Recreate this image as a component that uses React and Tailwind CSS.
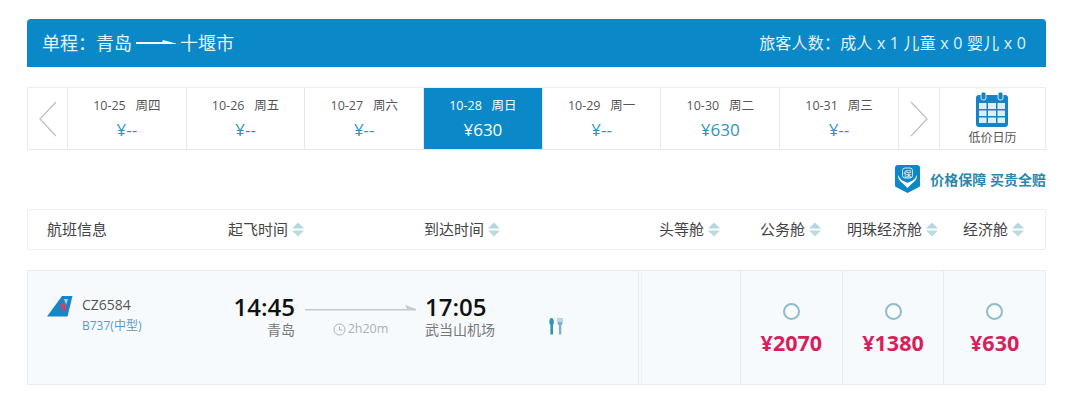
import React from 'react';

const FONT = "font-['Open_Sans','Noto_Sans_CJK_SC',sans-serif]";

const dates = [
  { date: '10-25', week: '周四', price: '¥--' },
  { date: '10-26', week: '周五', price: '¥--' },
  { date: '10-27', week: '周六', price: '¥--' },
  { date: '10-28', week: '周日', price: '¥630', active: true },
  { date: '10-29', week: '周一', price: '¥--' },
  { date: '10-30', week: '周二', price: '¥630' },
  { date: '10-31', week: '周三', price: '¥--' },
];

const fares = ['¥2070', '¥1380', '¥630'];

const SortIcon = () => (
  <svg width="12" height="15" viewBox="0 0 12 15" className="ml-[4px] shrink-0">
    <path d="M6 0.5 L12 6.5 H0 Z" fill="#b5d5e2" />
    <path d="M0 8.5 H12 L6 14.5 Z" fill="#b9dcdc" />
  </svg>
);

const Chevron = ({ right }) => (
  <svg width="18" height="36" viewBox="0 0 18 36" fill="none" stroke="#b9bfc4" strokeWidth="1.2">
    <path d={right ? 'M1 1 L17 18 L1 35' : 'M17 1 L1 18 L17 35'} />
  </svg>
);

const HeaderCell = ({ label, sort = true }) => (
  <div className="flex items-center text-[15px] text-[#444]">
    {label}
    {sort && <SortIcon />}
  </div>
);

const App = () => {
  return (
    <div className={`w-[1080px] h-[410px] bg-white overflow-hidden pl-[27px] pt-[19px] ${FONT}`}>
      <div className="w-[1019px]">
        {/* title bar */}
        <div className="h-[48px] bg-[#0a88c8] rounded-t-[4px] flex items-center justify-between pl-[15px] pr-[20px] text-[#e4f3fa]">
          <div className="flex items-center text-[18px]">
            <span>单程：青岛</span>
            <svg width="40" height="8" viewBox="0 0 40 8" className="ml-[4px] mr-[4px]">
              <path d="M0 3 H26 L27 1 L40 4.5 V5 H0 Z" fill="#f2fafd" />
            </svg>
            <span>十堰市</span>
          </div>
          <div className="text-[16px] tracking-[0.2px]">旅客人数：成人 x 1 儿童 x 0 婴儿 x 0</div>
        </div>

        {/* date strip */}
        <div className="mt-[20px] h-[63px] flex border border-[#e6e8ea] border-t-[#eceef0]">
          <div className="w-[40px] shrink-0 flex items-center justify-center border-r border-[#e6e8ea]">
            <Chevron />
          </div>
          {dates.map((d) => (
            <div
              key={d.date}
              className={`w-[118.7px] shrink-0 flex flex-col items-center pt-[8px] border-r border-[#e6e8ea] ${d.active ? 'bg-[#0a88c8] text-white' : 'text-[#555]'}`}
            >
              <div className="text-[12.5px] leading-[20px] whitespace-pre">{d.date}{'   '}{d.week}</div>
              <div className={`text-[17px] leading-[24px] mt-[2px] ${d.active ? 'text-white' : 'text-[#2f93b8]'}`}>{d.price}</div>
            </div>
          ))}
          <div className="w-[41px] shrink-0 flex items-center justify-center border-r border-[#e6e8ea]">
            <Chevron right />
          </div>
          <div className="flex-1 flex flex-col items-center pt-[4px]">
            <svg width="32" height="35" viewBox="0 0 32 35">
              <rect x="0" y="3" width="32" height="32" rx="3" fill="#1583c4" />
              <rect x="5" y="0" width="5" height="8" rx="2" fill="#1583c4" stroke="#fff" strokeWidth="0.8" />
              <rect x="22" y="0" width="5" height="8" rx="2" fill="#1583c4" stroke="#fff" strokeWidth="0.8" />
              <g fill="#dceef8">
                <rect x="3" y="11" width="7.5" height="6" />
                <rect x="12" y="11" width="8" height="6" />
                <rect x="21.5" y="11" width="7.5" height="6" />
                <rect x="3" y="18.5" width="7.5" height="5.5" />
                <rect x="12" y="18.5" width="8" height="5.5" />
                <rect x="21.5" y="18.5" width="7.5" height="5.5" />
                <rect x="3" y="25.5" width="7.5" height="5.5" />
                <rect x="12" y="25.5" width="8" height="5.5" />
                <rect x="21.5" y="25.5" width="7.5" height="5.5" />
              </g>
            </svg>
            <div className="text-[12px] leading-[14px] mt-[4px] text-[#555]">低价日历</div>
          </div>
        </div>

        {/* price guarantee */}
        <div className="h-[58px] flex items-center justify-end">
          <svg width="25" height="28" viewBox="0 0 25 28" className="mr-[10px]">
            <path d="M3 0 H22 A3 3 0 0 1 25 3 V20 A2 2 0 0 1 24 22 L12.5 28 L1 22 A2 2 0 0 1 0 20 V3 A3 3 0 0 1 3 0 Z" fill="#0a88c8" />
            <path d="M3 10 C3 16 7 17 12.5 23 C18 17 22 16 22 10 L19.5 14 C17 16.5 15 16 12.5 18 C10 16 8 16.5 5.5 14 Z" fill="#fff" />
            <rect x="7.5" y="3" width="10" height="10" rx="2.5" fill="none" stroke="#fff" strokeWidth="0.8" />
            <text x="12.5" y="11.5" textAnchor="middle" fontSize="8" fill="#fff">保</text>
          </svg>
          <span className="text-[14px] font-bold text-[#2a87ad]">价格保障 买贵全赔</span>
        </div>

        {/* table header */}
        <div className="h-[41px] border border-[#eceef0] rounded-[2px] grid grid-cols-[181px_196px_235px_101px_87px_116px_1fr] pl-[19px] mt-[1px]">
          <HeaderCell label="航班信息" sort={false} />
          <HeaderCell label="起飞时间" />
          <HeaderCell label="到达时间" />
          <HeaderCell label="头等舱" />
          <HeaderCell label="公务舱" />
          <HeaderCell label="明珠经济舱" />
          <HeaderCell label="经济舱" />
        </div>

        {/* flight row */}
        <div className="mt-[20px] h-[115px] bg-[#f6fafd] border border-[#e8ecef] flex">
          <div className="w-[610px] shrink-0 flex relative">
            <div className="w-[199px] shrink-0 pl-[19px] pt-[25px] flex">
              <svg width="26" height="22" viewBox="0 0 26 22">
                <path d="M15 0 L25.5 0 L20.5 20.5 L0 20.5 Z" fill="#1586c6" />
                <path d="M14 7 C18 6 20 10 18.5 15 C15 15 12 11 14 7 Z" fill="#c8456a" />
                <path d="M17 3 L21 3 L19 9 Z" fill="#a8d0e6" />
              </svg>
              <div className="ml-[9px]">
                <div className="text-[14px] leading-[20px] mt-[-1px] text-[#555]">CZ6584</div>
                <div className="text-[12px] leading-[20px] mt-[1px] text-[#5c9cc4]">B737(中型)</div>
              </div>
            </div>
            <div className="w-[68px] shrink-0 pt-[22px] text-right">
              <div className="text-[24px] leading-[28px] font-semibold text-[#111]">14:45</div>
              <div className="text-[14px] leading-[18px] text-[#777]">青岛</div>
            </div>
            <div className="w-[111px] shrink-0 ml-[10px] pt-[31px]">
              <svg width="111" height="9" viewBox="0 0 111 9" className="block">
                <path d="M0 7 H102 L100 3 L111 7 V8.4 H0 Z" fill="#c3c9ce" />
              </svg>
              <div className="mt-[9px] flex items-center justify-center text-[12.5px] text-[#aab0b5]">
                <svg width="13" height="13" viewBox="0 0 13 13" fill="none" stroke="#aab0b5" strokeWidth="1" className="mr-[2px]">
                  <circle cx="6.5" cy="6.5" r="5.5" />
                  <path d="M6.5 3.5 V7 H9.5" />
                </svg>
                2h20m
              </div>
            </div>
            <div className="ml-[9px] pt-[22px]">
              <div className="text-[24px] leading-[28px] font-semibold text-[#111]">17:05</div>
              <div className="text-[14px] leading-[18px] text-[#777]">武当山机场</div>
            </div>
            <svg width="16" height="17" viewBox="0 0 16 17" className="absolute left-[520px] top-[47px]">
              <path d="M3.5 0 C6 0 6.5 5 5 7 V16.5 H2.4 V7 C0.8 5 1 0 3.5 0 Z" fill="#2f93b8" />
              <path d="M9.5 0 H10.5 V4 H11.5 V0 H12.5 V4 H13.5 V0 H14.5 V5 C14.5 6.5 13.5 7 13.3 7.5 V16.5 H10.9 V7.5 C10.5 7 9.5 6.5 9.5 5 Z" fill="#7fb2c8" />
            </svg>
          </div>
          <div className="w-[102px] shrink-0 border-l border-[#e6ebef] pl-[2px]">
            <div className="h-full border-l border-[#eef2f5]" />
          </div>
          {fares.map((price) => (
            <div key={price} className="flex-1 border-l border-[#e6ebef] flex flex-col items-center pt-[32px]">
              <div className="w-[17px] h-[17px] rounded-full border-2 border-[#8fbcc8] bg-[#f8fcfd]" />
              <div className="mt-[9px] text-[21.5px] leading-[28px] font-bold text-[#d81e5b]">{price}</div>
            </div>
          ))}
        </div>
      </div>
    </div>
  );
};

export default App;
